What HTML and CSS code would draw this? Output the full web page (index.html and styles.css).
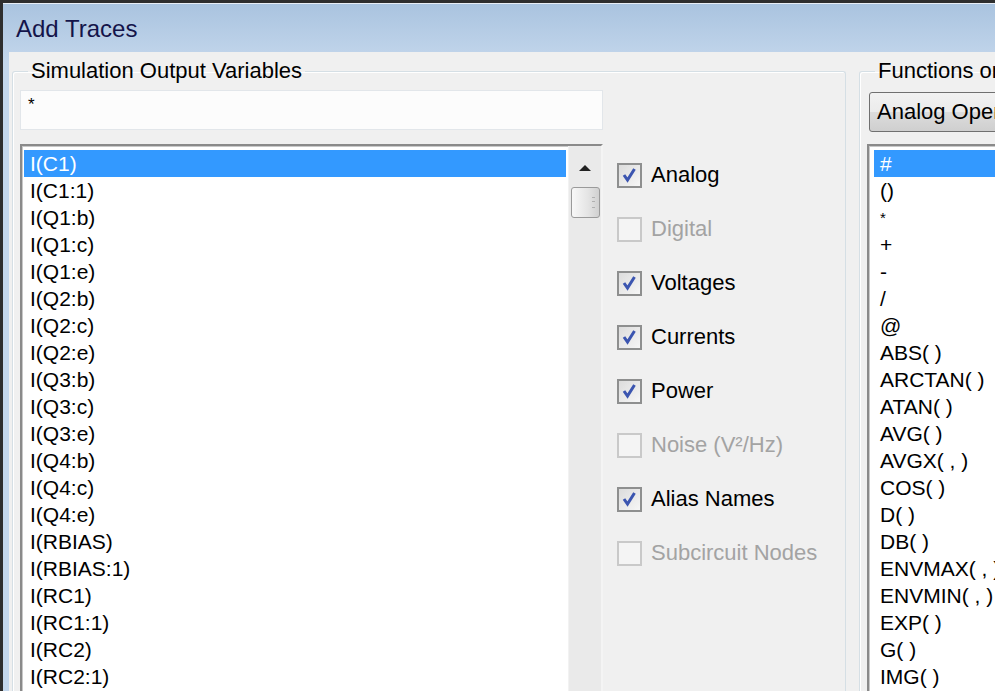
FILE: index.html
```html
<!DOCTYPE html>
<html lang="en">

<head>
    <meta charset="UTF-8" />
    <title>Add Traces</title>
    <link rel="stylesheet" href="styles.css">
</head>

<body>
    <div class="window">
        <div class="titlebar">Add Traces</div>
        <div class="frame">
            <div class="client">
                <fieldset class="group group-vars">
                    <legend>Simulation Output Variables</legend>
                    <div class="filter">*</div>
                    <div class="vars-row">
                        <div class="listbox vars-list">
                            <div class="items">
                                <div class="item selected">I(C1)</div>
                                <div class="item">I(C1:1)</div>
                                <div class="item">I(Q1:b)</div>
                                <div class="item">I(Q1:c)</div>
                                <div class="item">I(Q1:e)</div>
                                <div class="item">I(Q2:b)</div>
                                <div class="item">I(Q2:c)</div>
                                <div class="item">I(Q2:e)</div>
                                <div class="item">I(Q3:b)</div>
                                <div class="item">I(Q3:c)</div>
                                <div class="item">I(Q3:e)</div>
                                <div class="item">I(Q4:b)</div>
                                <div class="item">I(Q4:c)</div>
                                <div class="item">I(Q4:e)</div>
                                <div class="item">I(RBIAS)</div>
                                <div class="item">I(RBIAS:1)</div>
                                <div class="item">I(RC1)</div>
                                <div class="item">I(RC1:1)</div>
                                <div class="item">I(RC2)</div>
                                <div class="item">I(RC2:1)</div>
                            </div>
                            <div class="scrollbar">
                                <div class="arrow-up"></div>
                                <div class="thumb"><span class="grip"></span></div>
                            </div>
                        </div>
                        <div class="options">
                            <div class="option">
                                <span class="box checked">
                                    <svg width="21" height="21" viewBox="0 0 21 21"><path d="M5 10 L8.5 15 L15.5 4" fill="none" stroke="#3b55b0" stroke-width="3" /></svg>
                                </span>
                                <span class="text">Analog</span>
                            </div>
                            <div class="option disabled">
                                <span class="box"></span>
                                <span class="text">Digital</span>
                            </div>
                            <div class="option">
                                <span class="box checked">
                                    <svg width="21" height="21" viewBox="0 0 21 21"><path d="M5 10 L8.5 15 L15.5 4" fill="none" stroke="#3b55b0" stroke-width="3" /></svg>
                                </span>
                                <span class="text">Voltages</span>
                            </div>
                            <div class="option">
                                <span class="box checked">
                                    <svg width="21" height="21" viewBox="0 0 21 21"><path d="M5 10 L8.5 15 L15.5 4" fill="none" stroke="#3b55b0" stroke-width="3" /></svg>
                                </span>
                                <span class="text">Currents</span>
                            </div>
                            <div class="option">
                                <span class="box checked">
                                    <svg width="21" height="21" viewBox="0 0 21 21"><path d="M5 10 L8.5 15 L15.5 4" fill="none" stroke="#3b55b0" stroke-width="3" /></svg>
                                </span>
                                <span class="text">Power</span>
                            </div>
                            <div class="option disabled">
                                <span class="box"></span>
                                <span class="text">Noise (V&sup2;/Hz)</span>
                            </div>
                            <div class="option">
                                <span class="box checked">
                                    <svg width="21" height="21" viewBox="0 0 21 21"><path d="M5 10 L8.5 15 L15.5 4" fill="none" stroke="#3b55b0" stroke-width="3" /></svg>
                                </span>
                                <span class="text">Alias Names</span>
                            </div>
                            <div class="option disabled">
                                <span class="box"></span>
                                <span class="text">Subcircuit Nodes</span>
                            </div>
                        </div>
                    </div>
                </fieldset>

                <fieldset class="group group-funcs">
                    <legend>Functions or Macros</legend>
                    <div class="dropdown">Analog Operators and Functions</div>
                    <div class="listbox funcs-list">
                        <div class="items">
                            <div class="item selected">#</div>
                            <div class="item">()</div>
                            <div class="item small">*</div>
                            <div class="item">+</div>
                            <div class="item">-</div>
                            <div class="item">/</div>
                            <div class="item">@</div>
                            <div class="item">ABS( )</div>
                            <div class="item">ARCTAN( )</div>
                            <div class="item">ATAN( )</div>
                            <div class="item">AVG( )</div>
                            <div class="item">AVGX( , )</div>
                            <div class="item">COS( )</div>
                            <div class="item">D( )</div>
                            <div class="item">DB( )</div>
                            <div class="item">ENVMAX( , )</div>
                            <div class="item">ENVMIN( , )</div>
                            <div class="item">EXP( )</div>
                            <div class="item">G( )</div>
                            <div class="item">IMG( )</div>
                        </div>
                    </div>
                </fieldset>
            </div>
        </div>
    </div>
</body>

</html>
```

FILE: styles.css
```css
body {
    margin: 0;
    width: 995px;
    height: 691px;
    overflow: hidden;
    font-family: "Liberation Sans", Arial, sans-serif;
    color: #000;
    background: #c4d7ec;
}

.window {
    height: 688px;
    border-top: 3px solid #2e2e2e;
    border-left: 3px solid #2e2e2e;
    background: linear-gradient(#a9c3df, #c4d7ec 60px);
    display: flex;
    flex-direction: column;
}

.titlebar {
    flex-shrink: 0;
    height: 49px;
    box-sizing: border-box;
    padding: 10px 0 0 13px;
    font-size: 24px;
    line-height: 30px;
    color: #14144a;
    border-top: 1px solid #e8eef6;
}

.frame {
    flex: 1;
    min-height: 0;
    padding-left: 6px;
    display: flex;
}

.client {
    flex: 1;
    background: #f0f0f0;
    padding: 7px 0 0 3px;
    display: flex;
    gap: 13px;
    overflow: hidden;
}

.group {
    margin: 0;
    padding: 0 0 0 7px;
    border: 1px solid #d5dfe5;
    border-bottom: none;
    border-radius: 3px 3px 0 0;
    box-shadow: inset 1px 1px 0 #fff;
    min-width: 0;
}

.group legend {
    margin-left: 8px;
    padding: 0 3px;
    font-size: 22px;
    line-height: 24px;
}

.group-vars {
    width: 834px;
    box-sizing: border-box;
    flex-shrink: 0;
}

.group-funcs {
    width: 400px;
    flex-shrink: 0;
    padding-left: 7px;
}

.filter {
    margin-top: 7px;
    width: 583px;
    height: 40px;
    box-sizing: border-box;
    background: #fcfcfc;
    border: 1px solid #e2e6ea;
    padding: 4px 7px;
    font-size: 17px;
    line-height: 20px;
}

.vars-row {
    margin-top: 14px;
    display: flex;
    gap: 14px;
}

.listbox {
    display: flex;
    height: 560px;
    background: #fff;
    border-top: 2px solid #8a8a8a;
    border-left: 2px solid #8a8a8a;
    border-right: 2px solid #f4f4f4;
    box-shadow: inset 1px 1px 0 #c8c8c8;
    overflow: hidden;
}

.vars-list {
    width: 583px;
    box-sizing: border-box;
}

.items {
    flex: 1;
    padding: 4px 2px 0 2px;
}

.item {
    height: 27px;
    padding-left: 6px;
    font-size: 21px;
    line-height: 27px;
    white-space: nowrap;
}

.item.small {
    font-size: 15px;
}

.item.selected {
    background: #3399ff;
    color: #fff;
}

.scrollbar {
    width: 32px;
    background: #eaeaea;
    border-left: 1px solid #f2f2f2;
    display: flex;
    flex-direction: column;
    align-items: center;
}

.arrow-up {
    margin-top: 19px;
    width: 0;
    height: 0;
    border-left: 6px solid transparent;
    border-right: 6px solid transparent;
    border-bottom: 6px solid #222;
}

.thumb {
    margin-top: 16px;
    width: 29px;
    height: 31px;
    box-sizing: border-box;
    border: 1px solid #9a9a9a;
    border-radius: 3px;
    background: linear-gradient(90deg, #f8f8f8, #e4e4e4 60%, #d0d0d0);
    display: flex;
    align-items: center;
    justify-content: flex-end;
    padding-right: 4px;
}

.grip {
    width: 3px;
    height: 9px;
    border-top: 1px solid #b0b0b0;
    border-bottom: 1px solid #b0b0b0;
    background: linear-gradient(transparent 3px, #b0b0b0 3px, #b0b0b0 4px, transparent 4px);
}

.options {
    display: flex;
    flex-direction: column;
    padding-top: 4px;
}

.option {
    height: 54px;
    display: flex;
    align-items: center;
    gap: 9px;
    font-size: 22px;
}

.box {
    width: 25px;
    height: 25px;
    box-sizing: border-box;
    border: 2px solid #8e8f8f;
    background: linear-gradient(135deg, #dcdcdc, #f6f6f6);
    display: flex;
    align-items: center;
    justify-content: center;
}

.box svg {
    display: block;
}

.option.disabled .box {
    border-color: #c9c9c9;
    background: #f4f4f4;
}

.option.disabled .text {
    color: #a3a3a3;
}

.dropdown {
    margin: 9px 0 0 2px;
    height: 40px;
    box-sizing: border-box;
    border: 1px solid #707070;
    border-radius: 3px;
    background: linear-gradient(#f2f2f2, #ebebeb 50%, #dcdcdc 51%, #cfcfcf);
    padding: 0 7px;
    font-size: 22px;
    line-height: 38px;
    white-space: nowrap;
}

.funcs-list {
    margin-top: 12px;
    width: 400px;
}

.funcs-list .items {
    padding-left: 5px;
}
```
